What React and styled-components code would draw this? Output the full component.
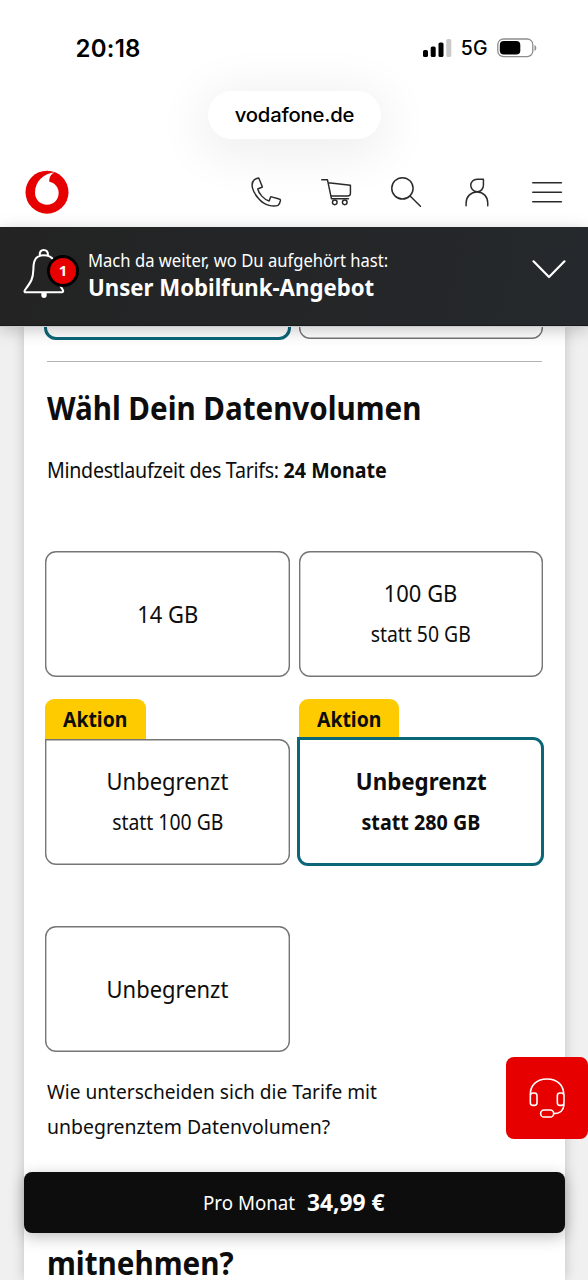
import React from "react";
import styled, { createGlobalStyle, css } from "styled-components";

const GlobalStyle = createGlobalStyle`
  * { box-sizing: border-box; }
  html, body { margin: 0; padding: 0; }
  body {
    width: 588px;
    height: 1280px;
    overflow: hidden;
    background: #f0f0f0;
    color: #0d0d0d;
    font-family: "Noto Sans", "Open Sans", sans-serif;
  }
`;

const Screen = styled.div`
  position: relative;
  width: 588px;
  height: 1280px;
  overflow: hidden;
  display: flex;
  flex-direction: column;
`;

/* Condensed run of brand type */
const Type = styled.span`
  display: block;
  white-space: pre;
  font-size: ${(p) => p.$size}px;
  line-height: ${(p) => p.$line || 30}px;
  font-weight: ${(p) => (p.$bold ? 700 : 400)};
  transform: scaleX(${(p) => p.$squeeze || 1});
  transform-origin: ${(p) => p.$origin || "left"} center;
`;

const TopArea = styled.header`
  position: relative;
  z-index: 3;
  flex: none;
  height: 227px;
  background: #fff;
  overflow: hidden;
  font-family: Inter, "Liberation Sans", sans-serif;
`;

const StatusBar = styled.div`
  display: flex;
  justify-content: space-between;
  align-items: center;
  height: 92px;
  padding: 4px 51.500px 0 75.500px;
`;

const Clock = styled.span`
  font-size: 24px;
  font-weight: 600;
  letter-spacing: 0.25px;
  color: #000;
`;

const StatusIcons = styled.div`
  display: flex;
  align-items: center;
  gap: 9px;
`;

const Network = styled.span`
  font-size: 19.5px;
  line-height: 20px;
  font-weight: 500;
  color: #000;
`;

const AddressPill = styled.div`
  display: flex;
  align-items: center;
  justify-content: center;
  width: 173px;
  height: 48px;
  margin: -1px auto 0 208px;
  border-radius: 24px;
  background: #fff;
  box-shadow: 0 8px 50px 8px rgba(0, 0, 0, 0.07);
  font-size: 20.3px;
  font-weight: 500;
  letter-spacing: -0.2px;
  line-height: 46px;
  padding-bottom: 1px;
  color: #000;
`;

const NavBar = styled.nav`
  display: flex;
  align-items: center;
  height: 88px;
  padding: 18px 24px 0 25px;
`;

const Logo = styled.svg`
  display: block;
  width: 44px;
  height: 44px;
  margin-right: auto;
`;

const NavIcons = styled.div`
  display: flex;
  align-items: center;
  gap: 36px;
`;

const NavIcon = styled.svg`
  display: block;
  width: 34.2px;
  height: 34px;
  fill: none;
  stroke: #2a2a2a;
  stroke-width: 4.4;
  stroke-linejoin: round;
  stroke-linecap: round;
`;

const Banner = styled.section`
  position: relative;
  z-index: 3;
  flex: none;
  display: flex;
  align-items: flex-start;
  height: 99px;
  padding: 18px 22px 0 23px;
  background: linear-gradient(100deg, #232323, #242628 60%, #25292d);
  border-bottom: 1px solid #17191a;
  box-shadow: 0 1px 0 #c9cbcc, 0 4px 16px rgba(0, 0, 0, 0.22);
  color: #fff;
`;

const BellBox = styled.div`
  position: relative;
  width: 65px;
  height: 56px;
`;

const Bell = styled.svg`
  display: block;
  width: 42px;
  height: 54px;
  margin-top: 2px;
`;

const BellCount = styled.span`
  position: absolute;
  left: 24px;
  top: 9.5px;
  width: 32px;
  height: 32px;
  border: 3px solid #000;
  border-radius: 50%;
  background: #e60000;
  font-size: 15px;
  line-height: 25px;
  font-weight: 700;
  text-align: center;
`;

const BannerText = styled.div`
  flex: 1;
`;

const Chevron = styled.svg`
  display: block;
  width: 34px;
  height: 20px;
  margin-top: 14px;
`;

const Sheet = styled.main`
  flex: none;
  width: 541px;
  height: 954px;
  margin-left: 24px;
  padding: 0 21px;
  background: #fff;
  box-shadow: 0 0 12px rgba(0, 0, 0, 0.2);
`;

const Row = styled.div`
  display: flex;
  gap: 9px;
  height: 126px;
  margin-left: 0.4px;
`;

const PastRow = styled(Row)`
  height: 12px;
`;

const FirstRow = styled(Row)`
  margin-top: 65px;
`;

const TaggedRow = styled(Row)`
  height: 166px;
  margin-top: 22px;
`;

const LastRow = styled(Row)`
  margin-top: 61px;
`;

const optionFrame = css`
  ${(p) =>
    p.$selected
      ? css`
          border: 3px solid #0b6678;
        `
      : css`
          box-shadow: inset 0 0 0 1.4px #757575;
        `}
`;

const PastOption = styled.div`
  flex: none;
  width: ${(p) => (p.$selected ? 247 : 244.4)}px;
  height: ${(p) => (p.$selected ? 52 : 51)}px;
  margin: -38px ${(p) => (p.$selected ? "-1.6px 0 -1px" : "0 0 0")};
  border-radius: ${(p) => (p.$selected ? 12 : 11)}px;
  background: #fff;
  ${optionFrame}
`;

const Option = styled.button`
  display: flex;
  flex: none;
  flex-direction: column;
  align-items: center;
  justify-content: center;
  width: ${(p) => (p.$selected ? 247 : 244.4)}px;
  height: ${(p) => (p.$selected ? 129 : 126)}px;
  margin: ${(p) => (p.$selected ? "-2px 0 0 -1.3px" : "0")};
  padding: 0 0 1px;
  border: 0;
  border-radius: ${(p) => (p.$tagged ? "0 11px 11px 11px" : "11px")};
  background: #fff;
  color: #0d0d0d;
  font-family: inherit;
  ${optionFrame}
`;

const Tagged = styled.div`
  display: flex;
  flex: none;
  flex-direction: column;
  width: 244.4px;
`;

const Tag = styled.div`
  display: flex;
  flex: none;
  align-items: center;
  justify-content: center;
  width: 100.5px;
  height: 40px;
  border-radius: 9px 9px 0 0;
  background: #fecb00;
`;

const Divider = styled.hr`
  height: 1px;
  margin: 23px 2px 0;
  border: 0;
  background: #b0b4b4;
`;

const Block = styled.div`
  margin: ${(p) => p.$top}px 0 0 2px;
`;

const Light = styled.span`
  letter-spacing: ${(p) => p.$track || 0}px;
`;

const Strong = styled.b`
  font-weight: 700;
`;

const PriceBar = styled.div`
  position: absolute;
  z-index: 4;
  left: 23.5px;
  top: 1172px;
  display: flex;
  align-items: center;
  width: 541px;
  height: 61px;
  padding: 0 0 1px 179px;
  border-radius: 8px;
  background: #0d0d0d;
  box-shadow: 0 4px 16px rgba(0, 0, 0, 0.25);
  color: #fff;
`;

const PriceLabel = styled.div`
  width: 104.5px;
`;

const ChatButton = styled.button`
  position: absolute;
  z-index: 4;
  right: 0;
  top: 1057px;
  display: flex;
  align-items: center;
  justify-content: center;
  width: 82px;
  height: 82px;
  padding: 0;
  border: 0;
  border-radius: 8px;
  background: #e60000;
`;

const Headset = styled.svg`
  display: block;
  width: 38px;
  height: 42px;
  fill: none;
  stroke: #fff;
  stroke-width: 4.8;
  stroke-linecap: round;
`;

function OptionText({ title, note, bold }) {
  return (
    <>
      <Type $size={23.6} $line={40} $bold={bold} $squeeze={bold ? 0.945 : 0.93} $origin="center">
        {title}
      </Type>
      {note && (
        <Type $size={21.2} $line={41} $bold={bold} $squeeze={bold ? 0.93 : 0.915} $origin="center">
          {note}
        </Type>
      )}
    </>
  );
}

function ActionTag() {
  return (
    <Tag>
      <Type $size={20.6} $bold $squeeze={0.94} $origin="center">Aktion</Type>
    </Tag>
  );
}

export default function App() {
  return (
    <Screen>
      <GlobalStyle />
      <TopArea>
        <StatusBar>
          <Clock>20:18</Clock>
          <StatusIcons>
            <svg width="29" height="18" viewBox="0 0 29 18">
              <rect x="0" y="11" width="5" height="7" rx="1.6" />
              <rect x="7.700" y="7.500" width="5" height="10.500" rx="1.6" />
              <rect x="15.500" y="3.500" width="5" height="14.500" rx="1.6" />
              <rect x="23.300" y="0" width="5" height="18" rx="1.6" fill="#c9c9c9" />
            </svg>
            <Network>5G</Network>
            <svg width="40" height="20" viewBox="0 0 40 20">
              <rect x="0.8" y="1" width="35" height="17.6" rx="5.6" fill="none" stroke="#8d8d8d" strokeWidth="1.3" />
              <rect x="2.8" y="3" width="20.5" height="13.6" rx="4" />
              <path d="M37.5 7v6c1.1-.5 1.8-1.6 1.8-3s-.7-2.500-1.800-3z" fill="#8d8d8d" />
            </svg>
          </StatusIcons>
        </StatusBar>
        <AddressPill>vodafone.de</AddressPill>
        <NavBar>
          <Logo viewBox="75 58 132 132">
            <circle cx="141" cy="124.500" r="64.500" fill="#e60000" />
            <path fill="#fff" d="M166 65C130 68 105 93 105 126c0 21 16 36 36 36 21 0 35-16 35-36 0-18-13-30-28-33-1-13 6-25 18-28z" />
          </Logo>
          <NavIcons>
            <NavIcon viewBox="748 74 102 102">
              <path d="M764 88q7-5 13-5l11 27-14 6c3 14 18 31 34 36l5-13 25 7q5 1 4 5c-1 6-3 10-7 14-13 5-40 2-58-20-20-21-26-46-13-57z" />
            </NavIcon>
            <NavIcon viewBox="76 74 102 102">
              <path d="M84 88h17l12 57h51M104 97l66 8v24q0 8-8 8h-50" />
              <circle cx="123" cy="156" r="7" />
              <circle cx="153" cy="156" r="7" />
            </NavIcon>
            <NavIcon viewBox="287 74 102 102">
              <circle cx="327" cy="114" r="32" />
              <path d="M350 137l31 31" />
            </NavIcon>
            <NavIcon viewBox="498 74 102 102">
              <path d="M568 87h-19c-11 0-19 8-19 18s8 19 19 19 19-8 19-19zM516 166v-8c0-19 14-33 33-33s32 14 32 33v8" />
            </NavIcon>
            <NavIcon viewBox="709 74 102 102">
              <path d="M717 97h86M717 125.500h86M717 154h86" />
            </NavIcon>
          </NavIcons>
        </NavBar>
      </TopArea>

      <Banner>
        <BellBox>
          <Bell viewBox="69 291 126 162" fill="none" stroke="#fff" strokeWidth="6.200" strokeLinecap="round" strokeLinejoin="round">
            <path d="M119 315c0-10 5-15 12-15s13 5 13 15M114 320q17-8 36 0c10 6 15 15 16 28l3 28c3 20 10 30 19 43 3 5 1 8-3 8H78c-4 0-6-3-3-7 20-27 24-35 25-60 0-20 2-34 14-40z" />
            <path d="M124 428h16v10q-1 6-8 6t-8-6z" fill="#fff" stroke="none" />
          </Bell>
          <BellCount>1</BellCount>
        </BellBox>
        <BannerText>
          <Type $size={18.8} $line={30} $squeeze={0.884}>Mach da weiter, wo Du aufgehört hast:</Type>
          <Type $size={22.6} $line={26} $bold $squeeze={0.982}>Unser Mobilfunk-Angebot</Type>
        </BannerText>
        <Chevron viewBox="0 0 34 20" fill="none" stroke="#fff" strokeWidth="2.2" strokeLinecap="round" strokeLinejoin="round">
          <path d="M1.500 2.300L17 18 32.500 2.300" />
        </Chevron>
      </Banner>

      <Sheet>
        <PastRow>
          <PastOption $selected />
          <PastOption />
        </PastRow>
        <Divider />
        <Block $top={25}>
          <Type $size={31.5} $line={42} $bold $squeeze={0.938}>Wähl Dein Datenvolumen</Type>
        </Block>
        <Block $top={25}>
          <Type $size={21} $line={32} $squeeze={0.936}>
            <Light $track={-0.33}>Mindestlaufzeit des Tarifs: </Light>
            <Strong>24 Monate</Strong>
          </Type>
        </Block>
        <FirstRow>
          <Option><OptionText title="14 GB" /></Option>
          <Option><OptionText title="100 GB" note="statt 50 GB" /></Option>
        </FirstRow>
        <TaggedRow>
          <Tagged>
            <ActionTag />
            <Option $tagged><OptionText title="Unbegrenzt" note="statt 100 GB" /></Option>
          </Tagged>
          <Tagged>
            <ActionTag />
            <Option $tagged $selected><OptionText title="Unbegrenzt" note="statt 280 GB" bold /></Option>
          </Tagged>
        </TaggedRow>
        <LastRow>
          <Option><OptionText title="Unbegrenzt" /></Option>
        </LastRow>
        <Block $top={21.5}>
          <Type $size={20.8} $line={35} $squeeze={0.919}>Wie unterscheiden sich die Tarife mit</Type>
          <Type $size={20.8} $line={35} $squeeze={0.935}>unbegrenztem Datenvolumen?</Type>
        </Block>
        <Block $top={102.5}>
          <Type $size={31.5} $line={34} $bold $squeeze={0.94}>mitnehmen?</Type>
        </Block>
      </Sheet>

      <PriceBar>
        <PriceLabel>
          <Type $size={20.6} $line={30} $squeeze={0.91}>Pro Monat</Type>
        </PriceLabel>
        <Type $size={23} $line={30} $bold $squeeze={0.99}>34,99 €</Type>
      </PriceBar>

      <ChatButton aria-label="Chat">
        <Headset viewBox="264 112 114 126">
          <path d="M271 164c0-29 20-46 50-46s50 17 50 46M372 196c-2 20-13 26-31 26" />
          <rect x="271" y="160" width="20" height="37" rx="8" />
          <rect x="352" y="160" width="20" height="37" rx="8" />
          <rect x="302" y="211" width="39" height="21" rx="10" />
        </Headset>
      </ChatButton>
    </Screen>
  );
}
